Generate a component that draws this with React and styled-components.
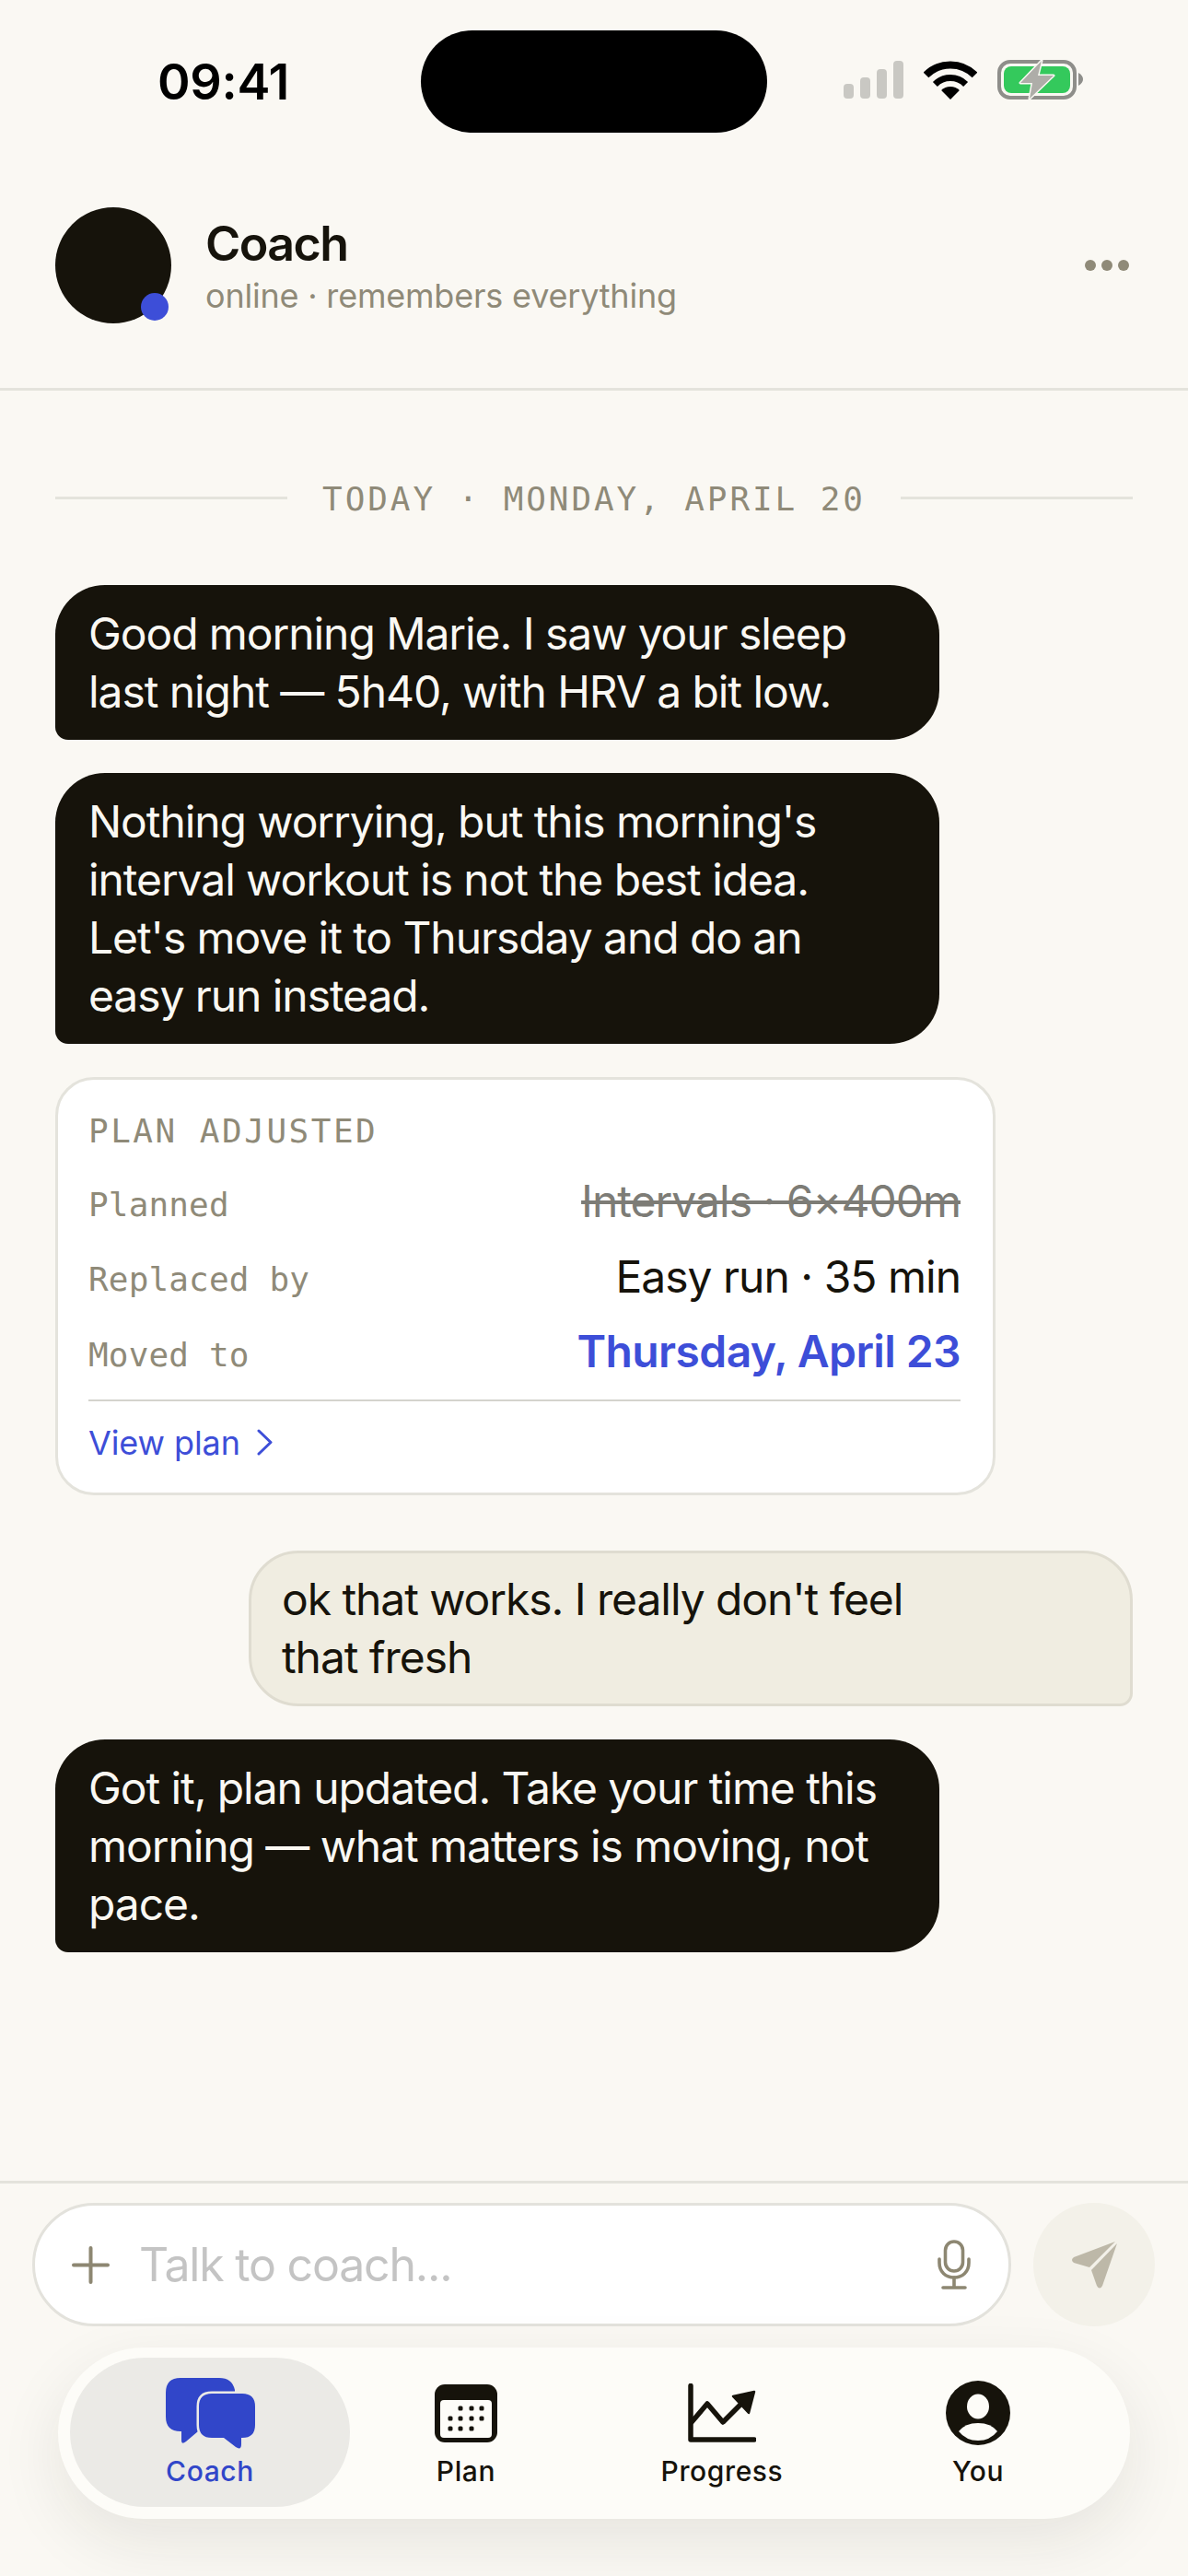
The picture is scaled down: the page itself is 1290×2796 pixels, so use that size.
import React from 'react'
import styled, { createGlobalStyle } from 'styled-components'

const GlobalStyle = createGlobalStyle`
  html, body { margin: 0; padding: 0; background: #faf8f3; }
  * { box-sizing: border-box; }
`

const Page = styled.div`
  width: 1290px;
  height: 2796px;
  display: flex;
  flex-direction: column;
  background: #faf8f3;
  color: #16130b;
  font-family: Inter, 'Noto Sans', sans-serif;
  overflow: hidden;
`

const StatusBar = styled.div`
  display: grid;
  grid-template-columns: 457px 376px 1fr;
  align-items: center;
  padding-top: 33px;
`

const Time = styled.div`
  padding-left: 171px;
  font-size: 54px;
  font-weight: 600;
  line-height: 111px;
  letter-spacing: -0.3px;
  color: #000;
`

const Island = styled.div`
  height: 111px;
  border-radius: 56px;
  background: #000;
`

const StatusIcons = styled.div`
  display: flex;
  align-items: center;
  gap: 22px;
  padding: 0 0 4px 83px;
`

const Header = styled.header`
  display: flex;
  align-items: center;
  gap: 37px;
  padding: 81px 64px 70px 60px;
  border-bottom: 3px solid #e4e3dc;
`

const Avatar = styled.div`
  position: relative;
  width: 126px;
  height: 126px;
  flex: none;
  border-radius: 50%;
  background: #16130b;
`

const OnlineDot = styled.span`
  position: absolute;
  left: 93px;
  top: 93px;
  width: 30px;
  height: 30px;
  border-radius: 50%;
  background: #3d4ed8;
`

const HeaderText = styled.div`
  flex: 1;
`

const Name = styled.div`
  font-size: 52px;
  font-weight: 600;
  line-height: 66px;
  letter-spacing: -1.6px;
`

const Sub = styled.div`
  font-size: 36px;
  line-height: 46px;
  letter-spacing: -0.2px;
  color: #8f8a78;
`

const MoreDots = styled.div`
  display: flex;
  gap: 6px;
`

const MoreDot = styled.span`
  width: 12px;
  height: 12px;
  border-radius: 50%;
  background: #8f8a78;
`

const Thread = styled.main`
  flex: 1;
  display: flex;
  flex-direction: column;
  gap: 36px;
  padding: 92px 60px 0;
`

const DateRow = styled.div`
  display: flex;
  align-items: center;
  gap: 38px;
  margin-bottom: 35px;
  font-family: 'DejaVu Sans Mono', monospace;
  font-size: 36px;
  line-height: 44px;
  letter-spacing: 2.9px;
  color: #8f8a78;
  white-space: nowrap;

  &::before, &::after {
    content: '';
    flex: 1;
    height: 3px;
    background: #e4e3dc;
  }
`

const DateText = styled.span`
  padding-top: 4px;
`

const Bubble = styled.div`
  width: 960px;
  padding: 21px 36px;
  border-radius: 54px 54px 54px 14px;
  background: #16130b;
  color: #faf8f3;
  font-size: 48px;
  line-height: 63px;
  letter-spacing: -1.08px;
`

const MyBubble = styled.div`
  align-self: flex-end;
  width: 960px;
  margin-top: 24px;
  padding: 18px 33px 19px;
  border: 3px solid #dfdcd0;
  border-radius: 54px 54px 14px 54px;
  background: #f0ede1;
  font-size: 48px;
  line-height: 63px;
  letter-spacing: -1.08px;
`

const Card = styled.section`
  width: 1021px;
  padding: 36px 35px 31px 33px;
  border: 3px solid #e4e3dc;
  border-radius: 42px;
  background: #fff;
`

const CardTitle = styled.div`
  font-family: 'DejaVu Sans Mono', monospace;
  font-size: 36px;
  line-height: 40px;
  letter-spacing: 2.5px;
  color: #8f8a78;
`

const CardRows = styled.div`
  display: flex;
  flex-direction: column;
  margin-top: 20px;
`

const CardRow = styled.div`
  display: flex;
  align-items: center;
  justify-content: space-between;
  height: 81.5px;
`

const RowLabel = styled.span`
  margin-bottom: 3px;
  font-family: 'DejaVu Sans Mono', monospace;
  font-size: 36px;
  letter-spacing: 0.15px;
  color: #8f8a78;
`

const RowValue = styled.span`
  margin-bottom: 10px;
  font-size: 48px;
  font-weight: ${p => (p.$accent ? 600 : 400)};
  letter-spacing: ${p => (p.$accent ? '-0.6px' : '-1px')};
  color: ${p => (p.$accent ? '#3d4ed8' : p.$old ? '#7d7c76' : '#16130b')};
  text-decoration: ${p => (p.$old ? 'line-through' : 'none')};
`

const CardLink = styled.div`
  display: flex;
  align-items: center;
  gap: 18px;
  margin-top: 6px;
  padding-top: 22px;
  border-top: 2px solid #d4d3cd;
  font-size: 36px;
  line-height: 46px;
  letter-spacing: -0.1px;
  color: #3d4ed8;
`

const Composer = styled.div`
  display: flex;
  gap: 24px;
  padding: 21px 36px 0 35px;
  border-top: 3px solid #e4e3dc;
`

const InputBox = styled.div`
  flex: 1;
  height: 134px;
  display: flex;
  align-items: center;
  gap: 32px;
  padding: 0 41px 0 40px;
  border: 3px solid #e3e2dc;
  border-radius: 67px;
  background: #fff;
`

const Placeholder = styled.div`
  flex: 1;
  font-size: 50px;
  letter-spacing: -1.2px;
  color: #c4c4c4;
`

const SendButton = styled.div`
  width: 132px;
  height: 134px;
  display: flex;
  align-items: center;
  justify-content: center;
  border-radius: 50%;
  background: #f3f1e9;
`

const Nav = styled.nav`
  display: grid;
  grid-template-columns: repeat(4, 278px);
  width: 1164px;
  height: 186px;
  margin: 23px 0 62px 63px;
  padding: 11px 26px 13px;
  border-radius: 93px;
  background: #fdfcf8;
  box-shadow: 0 24px 70px rgba(30, 28, 20, 0.09);
`

const NavItem = styled.div`
  display: flex;
  flex-direction: column;
  align-items: center;
  margin: 0 ${p => (p.$active ? '-13px' : '0')};
  padding-top: 21px;
  border-radius: 81px;
  background: ${p => (p.$active ? '#ebeae6' : 'transparent')};
`

const NavIcon = styled.div`
  height: 78px;
  display: flex;
  align-items: center;
`

const NavLabel = styled.div`
  margin-top: 6px;
  font-size: 30px;
  font-weight: 500;
  line-height: 36px;
  letter-spacing: 0.6px;
  color: ${p => (p.$active ? '#3146c9' : '#16130b')};
`

const SignalIcon = () => (
  <svg width="65" height="41" viewBox="0 0 65 41" fill="#c9c8c3">
    <rect x="0" y="25" width="11" height="16" rx="4" />
    <rect x="18" y="18" width="11" height="23" rx="4" />
    <rect x="36" y="9" width="11" height="32" rx="4" />
    <rect x="54" y="0" width="11" height="41" rx="4" />
  </svg>
)

const WifiIcon = () => (
  <svg width="58" height="42" viewBox="0 0 58 42" fill="none" stroke="#000">
    <path d="M2.5 15.5A37.5 37.5 0 0 1 55.5 15.5" strokeWidth="8" />
    <path d="M12.4 25.4A23.5 23.5 0 0 1 45.6 25.4" strokeWidth="7" />
    <path d="M29 42L19.1 32.1A14 14 0 0 1 38.9 32.1Z" fill="#000" stroke="none" />
  </svg>
)

const BatteryIcon = () => (
  <svg width="93" height="43" viewBox="0 0 93 43" fill="none">
    <rect x="2" y="2" width="82" height="39" rx="12" stroke="#8e8e8a" strokeWidth="4" />
    <rect x="7" y="7" width="72" height="29" rx="8" fill="#34c95c" />
    <path d="M88 14Q93 17 93 21Q93 25 88 28Z" fill="#8e8e8a" />
    <path d="M48 1L25 25H38L35 42L61 17H44Z" fill="#aeada8" stroke="#faf8f3" strokeWidth="3" strokeLinejoin="round" paintOrder="stroke" />
  </svg>
)

const Chevron = () => (
  <svg width="17" height="29" viewBox="0 0 17 29" fill="none" stroke="#3d4ed8" strokeWidth="3" strokeLinecap="round" strokeLinejoin="round">
    <path d="M2 2L15 14.5L2 27" />
  </svg>
)

const PlusIcon = () => (
  <svg width="41" height="41" viewBox="0 0 41 41" stroke="#8d8772" strokeWidth="4" strokeLinecap="round">
    <path d="M20.5 2V39M2 20.5H39" />
  </svg>
)

const MicIcon = () => (
  <svg width="36" height="54" viewBox="0 0 36 54" fill="none" stroke="#8d8772" strokeWidth="3.6" strokeLinecap="round">
    <rect x="8.5" y="2" width="19" height="32" rx="9.5" />
    <path d="M2 21V25C2 35 9 41 18 41C27 41 34 35 34 25V21" />
    <path d="M18 41V51M6 52H30" />
  </svg>
)

const SendIcon = () => (
  <svg width="52" height="52" viewBox="0 0 52 52" fill="#bdb8a8">
    <path d="M49 1L4 18Q0 21 4 24L21 29Z" />
    <path d="M51 3L23 32L29 49Q32 54 35 49Z" />
  </svg>
)

const CoachIcon = () => (
  <svg width="97" height="77" viewBox="0 0 97 77" fill="#3146c9">
    <path d="M16 0H58Q72 0 75 13V58H17V68Q17 73 22 69L35 58H16Q0 58 0 42V16Q0 0 16 0Z" />
    <path
      d="M50 17H83Q97 17 97 31V51Q97 65 83 65H82V72Q82 79 76 75L63 65H50Q36 65 36 51V31Q36 17 50 17Z"
      stroke="#ebeae6"
      strokeWidth="5"
      paintOrder="stroke"
    />
  </svg>
)

const calendarDots = [
  [28, 26], [40, 26], [51, 26],
  [17, 37], [28, 37], [40, 37], [51, 37],
  [17, 48], [28, 48], [40, 48],
]

const PlanIcon = () => (
  <svg width="68" height="63" viewBox="0 0 68 63">
    <rect width="68" height="63" rx="11" fill="#16130b" />
    <rect x="6" y="17" width="56" height="41" rx="4" fill="#fdfcf8" />
    {calendarDots.map(([x, y]) => (
      <rect key={`${x}-${y}`} x={x - 2.5} y={y - 2.5} width="5" height="5" rx="1.5" fill="#16130b" />
    ))}
  </svg>
)

const ProgressIcon = () => (
  <svg width="74" height="64" viewBox="0 0 74 64" fill="none" stroke="#16130b" strokeLinecap="round" strokeLinejoin="round">
    <path d="M3 2.5V61H72" strokeWidth="5.5" />
    <path d="M4 42L21 22L38 42L56 24" strokeWidth="5.5" />
    <path d="M72 9L49 14L66 32Z" fill="#16130b" strokeWidth="2.5" />
  </svg>
)

const YouIcon = () => (
  <svg width="70" height="70" viewBox="0 0 70 70">
    <circle cx="35" cy="35" r="35" fill="#16130b" />
    <ellipse cx="35" cy="28" rx="12" ry="13.5" fill="#fdfcf8" />
    <path d="M14 55Q21 46 35 46Q49 46 56 55Q48 65 35 65Q22 65 14 55Z" fill="#fdfcf8" />
  </svg>
)

const tabs = [
  { label: 'Coach', Icon: CoachIcon, active: true },
  { label: 'Plan', Icon: PlanIcon },
  { label: 'Progress', Icon: ProgressIcon },
  { label: 'You', Icon: YouIcon },
]

export default function App() {
  return (
    <Page>
      <GlobalStyle />
      <StatusBar>
        <Time>09:41</Time>
        <Island />
        <StatusIcons>
          <SignalIcon />
          <WifiIcon />
          <BatteryIcon />
        </StatusIcons>
      </StatusBar>

      <Header>
        <Avatar>
          <OnlineDot />
        </Avatar>
        <HeaderText>
          <Name>Coach</Name>
          <Sub>online · remembers everything</Sub>
        </HeaderText>
        <MoreDots>
          <MoreDot />
          <MoreDot />
          <MoreDot />
        </MoreDots>
      </Header>

      <Thread>
        <DateRow>
          <DateText>TODAY · MONDAY, APRIL 20</DateText>
        </DateRow>
        <Bubble>
          Good morning Marie. I saw your sleep<br />
          last night — 5h40, with HRV a bit low.
        </Bubble>
        <Bubble>
          Nothing worrying, but this morning's<br />
          interval workout is not the best idea.<br />
          Let's move it to Thursday and do an<br />
          easy run instead.
        </Bubble>
        <Card>
          <CardTitle>PLAN ADJUSTED</CardTitle>
          <CardRows>
            <CardRow>
              <RowLabel>Planned</RowLabel>
              <RowValue $old>Intervals · 6×400m</RowValue>
            </CardRow>
            <CardRow>
              <RowLabel>Replaced by</RowLabel>
              <RowValue>Easy run · 35 min</RowValue>
            </CardRow>
            <CardRow>
              <RowLabel>Moved to</RowLabel>
              <RowValue $accent>Thursday, April 23</RowValue>
            </CardRow>
          </CardRows>
          <CardLink>
            View plan <Chevron />
          </CardLink>
        </Card>
        <MyBubble>
          ok that works. I really don't feel<br />
          that fresh
        </MyBubble>
        <Bubble>
          Got it, plan updated. Take your time this<br />
          morning — what matters is moving, not<br />
          pace.
        </Bubble>
      </Thread>

      <Composer>
        <InputBox>
          <PlusIcon />
          <Placeholder>Talk to coach...</Placeholder>
          <MicIcon />
        </InputBox>
        <SendButton>
          <SendIcon />
        </SendButton>
      </Composer>

      <Nav>
        {tabs.map(({ label, Icon, active }) => (
          <NavItem key={label} $active={active}>
            <NavIcon>
              <Icon />
            </NavIcon>
            <NavLabel $active={active}>{label}</NavLabel>
          </NavItem>
        ))}
      </Nav>
    </Page>
  )
}
